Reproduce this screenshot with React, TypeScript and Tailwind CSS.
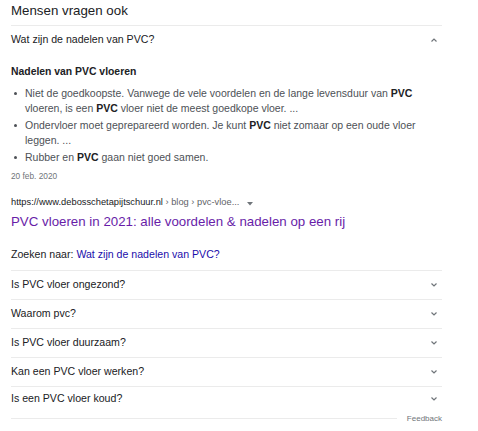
// People-also-ask block, scaled-down search result

const font = "font-['Liberation_Sans',Arial,sans-serif]";

const questions = [
  "Is PVC vloer ongezond?",
  "Waarom pvc?",
  "Is PVC vloer duurzaam?",
  "Kan een PVC vloer werken?",
  "Is een PVC vloer koud?",
];

function Chevron({ up = false }: { up?: boolean }) {
  return (
    <svg width="16" height="10" viewBox="0 0 16 10" className="shrink-0">
      <path
        d={up ? "M5.5 6.5 L8 4 L10.5 6.5" : "M5.5 3.5 L8 6 L10.5 3.5"}
        fill="none"
        stroke="#70757a"
        strokeWidth="1.2"
      />
    </svg>
  );
}

function Bullet({ children }: { children: React.ReactNode }) {
  return (
    <li className="flex">
      <span className="w-[14px] shrink-0 pt-[6px] pl-[3px]">
        <span className="block h-[3px] w-[3px] rounded-full bg-[#4d5156]" />
      </span>
      <span>{children}</span>
    </li>
  );
}

export default function App() {
  return (
    <div className={`${font} bg-white h-[431px] w-[478px] overflow-hidden`}>
      <div className="ml-[11px] w-[431px]">
        <div className="h-[26px] border-b border-[#ebebeb] pt-[3px]">
          <h2 className="text-[13.3px] leading-[16px] text-[#202124]">Mensen vragen ook</h2>
        </div>

        <div className="flex h-[28px] items-center justify-between">
          <span className="text-[10.6px] text-[#202124]">Wat zijn de nadelen van PVC?</span>
          <Chevron up />
        </div>

        <div className="mt-[11px] text-[10.4px] font-bold leading-[14px] text-[#202124]">
          Nadelen van PVC vloeren
        </div>

        <ul className="mt-[7px] flex flex-col gap-[3px] text-[10.5px] leading-[14.5px] text-[#4d5156]">
          <Bullet>
            Niet de goedkoopste. Vanwege de vele voordelen en de lange levensduur van{" "}
            <b className="text-[#202124]">PVC</b>
            <br />
            vloeren, is een <b className="text-[#202124]">PVC</b> vloer niet de meest goedkope vloer. ...
          </Bullet>
          <Bullet>
            Ondervloer moet geprepareerd worden. Je kunt <b className="text-[#202124]">PVC</b> niet zomaar op een oude vloer
            <br />
            leggen. ...
          </Bullet>
          <Bullet>
            Rubber en <b className="text-[#202124]">PVC</b> gaan niet goed samen.
          </Bullet>
        </ul>

        <div className="mt-[5px] text-[8.3px] leading-[12px] text-[#70757a]">20 feb. 2020</div>

        <div className="mt-[13px] flex items-center text-[9.3px] leading-[14px]">
          <span className="text-[#202124]">https://www.debosschetapijtschuur.nl</span>
          <span className="text-[#5f6368]">&nbsp;› blog › pvc-vloe...</span>
          <svg width="6" height="4" viewBox="0 0 6 4" className="ml-[8px] mt-[4px]">
            <path d="M0 0 L6 0 L3 3.5 Z" fill="#70757a" />
          </svg>
        </div>

        <div className="mt-[4px] text-[13.3px] leading-[18px] text-[#681da8]">
          PVC vloeren in 2021: alle voordelen &amp; nadelen op een rij
        </div>

        <div className="mt-[15px] text-[10.6px] leading-[16px] text-[#202124]">
          Zoeken naar: <span className="text-[#1a0dab]">Wat zijn de nadelen van PVC?</span>
        </div>

        <div className="mt-[8px] border-t border-[#ebebeb]">
          {questions.map((q, i) => (
            <div
              key={q}
              className={`flex items-center justify-between ${
                i < questions.length - 1 ? "h-[29px] border-b border-[#ebebeb]" : "h-[25px]"
              }`}
            >
              <span className="text-[10.6px] text-[#202124]">{q}</span>
              <Chevron />
            </div>
          ))}
        </div>

        <div className="flex h-[14px] items-center">
          <div className="h-px flex-1 bg-[#ebebeb]" />
          <span className="ml-[10px] text-[8px] text-[#70757a]">Feedback</span>
        </div>
      </div>
    </div>
  );
}
